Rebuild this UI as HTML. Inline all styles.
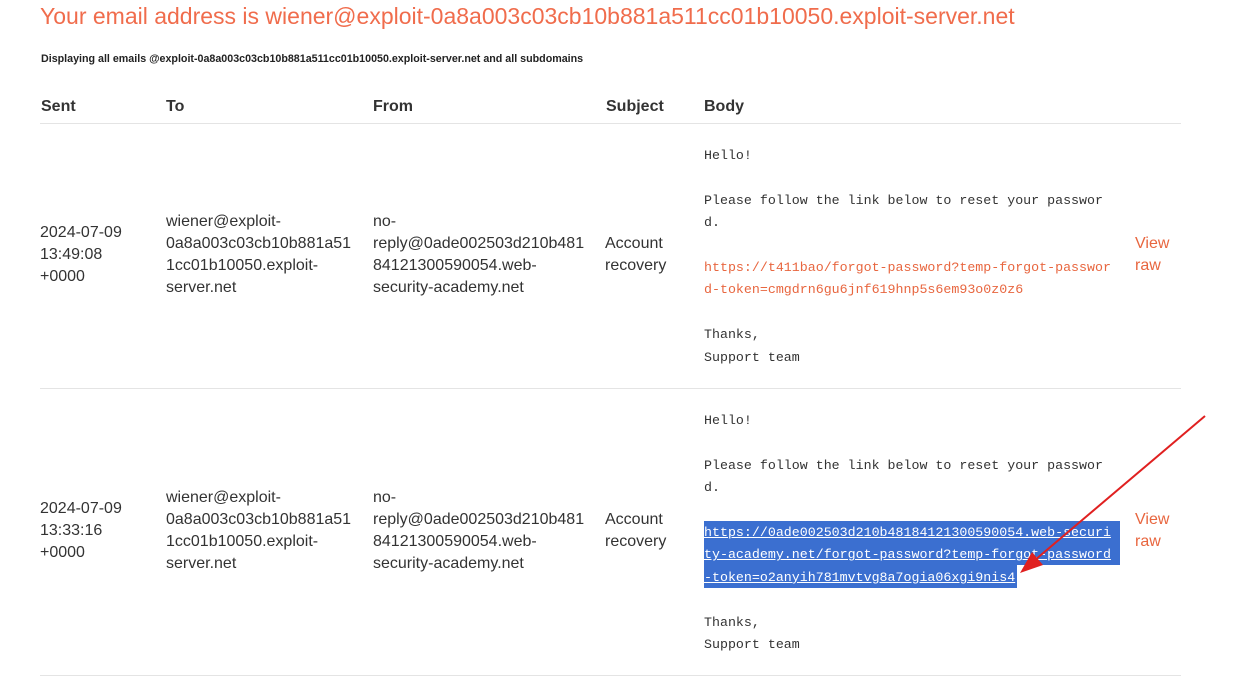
<!DOCTYPE html>
<html><head><meta charset="utf-8"><style>
body{margin:0;background:#fff;width:1255px;height:686px;overflow:hidden;position:relative;font-family:"Liberation Sans",Arial,sans-serif;color:#333}
.a{position:absolute;white-space:nowrap}
.c{font-size:16px;line-height:22px}
.h{font-size:16px;font-weight:bold;line-height:22px;color:#333}
.m{font-family:"Liberation Mono",monospace;font-size:13.3px;line-height:22.4px;color:#333}
.o{color:#e8663f}
.hr{position:absolute;left:40px;width:1141px;height:1px;background:#e4e4e4}
</style></head><body>
<div class="a o" style="left:40px;top:2px;font-size:23px;line-height:28px;color:#f06c4c">Your email address is wiener@exploit-0a8a003c03cb10b881a511cc01b10050.exploit-server.net</div>
<div class="a" style="left:41px;top:53px;font-size:10.7px;font-weight:bold;color:#222">Displaying all emails @exploit-0a8a003c03cb10b881a511cc01b10050.exploit-server.net and all subdomains</div>
<div class="a h" style="left:41px;top:96px">Sent</div>
<div class="a h" style="left:166px;top:96px">To</div>
<div class="a h" style="left:373px;top:96px">From</div>
<div class="a h" style="left:606px;top:96px">Subject</div>
<div class="a h" style="left:704px;top:96px">Body</div>
<div class="hr" style="top:123px"></div>

<div class="a c" style="left:40px;top:222px">2024-07-09<br>13:49:08<br>+0000</div>
<div class="a c" style="left:166px;top:211px">wiener@exploit-<br>0a8a003c03cb10b881a51<br>1cc01b10050.exploit-<br>server.net</div>
<div class="a c" style="left:373px;top:211px">no-<br>reply@0ade002503d210b481<br>84121300590054.web-<br>security-academy.net</div>
<div class="a c" style="left:605px;top:233px">Account<br>recovery</div>
<div class="a m" style="left:704px;top:145px">Hello!<br><br>Please follow the link below to reset your passwor<br>d.<br><br><span class="o">https://t411bao/forgot-password?temp-forgot-passwor<br>d-token=cmgdrn6gu6jnf619hnp5s6em93o0z0z6</span><br><br>Thanks,<br>Support team</div>
<div class="a c o" style="left:1135px;top:233px">View<br>raw</div>
<div class="hr" style="top:388px"></div>

<div class="a c" style="left:40px;top:498px">2024-07-09<br>13:33:16<br>+0000</div>
<div class="a c" style="left:166px;top:487px">wiener@exploit-<br>0a8a003c03cb10b881a51<br>1cc01b10050.exploit-<br>server.net</div>
<div class="a c" style="left:373px;top:487px">no-<br>reply@0ade002503d210b481<br>84121300590054.web-<br>security-academy.net</div>
<div class="a c" style="left:605px;top:509px">Account<br>recovery</div>
<div class="a" style="left:704px;top:521px;width:416px;height:44px;background:#3b6fd0"></div>
<div class="a" style="left:704px;top:565px;width:313px;height:23px;background:#3b6fd0"></div>
<div class="a m" style="left:704px;top:410px">Hello!<br><br>Please follow the link below to reset your passwor<br>d.<br><br><span style="color:#fff;text-decoration:underline">https://0ade002503d210b48184121300590054.web-securi<br>ty-academy.net/forgot-password?temp-forgot-password<br>-token=o2anyih781mvtvg8a7ogia06xgi9nis4</span><br><br>Thanks,<br>Support team</div>
<div class="a c o" style="left:1135px;top:509px">View<br>raw</div>
<div class="hr" style="top:675px"></div>

<svg class="a" style="left:0;top:0" width="1255" height="686">
<line x1="1205" y1="416" x2="1035" y2="560" stroke="#e02020" stroke-width="2"/>
<polygon points="1020,573 1032,552 1043,565" fill="#e02020"/>
</svg>
</body></html>
